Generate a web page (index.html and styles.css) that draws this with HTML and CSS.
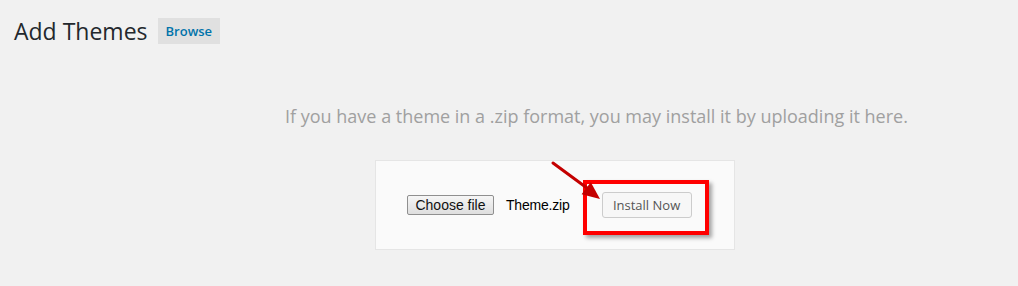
FILE: index.html
```html
<!DOCTYPE html>
<html>
<head>
<meta charset="utf-8">
<link rel="stylesheet" href="styles.css">
</head>
<body>
<div class="wrap">
  <div class="title-row">
    <h1 class="title">Add Themes</h1>
    <a class="title-action">Browse</a>
  </div>
  <p class="install-help">If you have a theme in a .zip format, you may install it by uploading it here.</p>
  <div class="upload-form">
    <div class="file-field">
      <span class="choose-btn">Choose file</span>
      <span class="file-name">Theme.zip</span>
    </div>
    <span class="install-btn">Install Now</span>
    <div class="highlight"></div>
    <svg class="arrow" width="60" height="50" viewBox="0 0 60 50">
      <line x1="8" y1="7" x2="44" y2="33.5" stroke="#c40000" stroke-width="3" stroke-linecap="round"/>
      <polygon points="55,43 36.6,38.3 45.8,26.2" fill="#c40000"/>
    </svg>
  </div>
</div>
</body>
</html>
```
FILE: styles.css
```css
html, body {
  margin: 0;
  padding: 0;
  background: #f1f1f1;
}
body {
  font-family: "Open Sans", "Liberation Sans", sans-serif;
  color: #23282d;
}
.wrap {
  padding: 0 0 0 14px;
}
.title-row {
  display: flex;
  align-items: center;
  gap: 11px;
  padding-top: 18px;
  height: 26px;
}
.title {
  margin: 0;
  font-size: 23px;
  font-weight: 400;
  line-height: 26px;
  color: #23282d;
}
.title-action {
  display: inline-block;
  height: 26px;
  box-sizing: border-box;
  padding: 0 8px;
  line-height: 26px;
  background: #e0e0e0;
  color: #0073aa;
  font-size: 13px;
  font-weight: 600;
  margin-left: -1px;
}
.install-help {
  margin: 0;
  padding: 60px 0 0 271px;
  font-size: 18px;
  line-height: 24px;
  color: #a0a0a0;
}
.upload-form {
  position: relative;
  margin: 32px 0 0 361px;
  width: 299px;
  height: 28px;
  padding: 30px 30px 30px 29px;
  background: #fafafa;
  border: 1px solid #e5e5e5;
  display: flex;
  align-items: center;
}
.file-field {
  display: flex;
  align-items: center;
  gap: 12px;
  margin-left: 2px;
  font-family: "Liberation Sans", Arial, sans-serif;
  font-size: 14px;
  color: #000;
}
.choose-btn {
  display: inline-block;
  box-sizing: border-box;
  height: 20px;
  width: 87px;
  line-height: 18px;
  text-align: center;
  border: 1px solid #8f8f8f;
  border-radius: 2px;
  background: linear-gradient(#f6f6f6, #dedede);
  color: #111;
}
.file-name {
  letter-spacing: -0.2px;
}
.install-btn {
  margin-left: 32px;
  display: inline-block;
  box-sizing: border-box;
  width: 90px;
  height: 26px;
  line-height: 24px;
  text-align: center;
  border: 1px solid #cccccc;
  border-radius: 3px;
  background: #f7f7f7;
  color: #555;
  font-size: 13px;
}
.highlight {
  position: absolute;
  left: 207px;
  top: 19px;
  width: 118px;
  height: 47px;
  border: 4px solid #ff0000;
  box-shadow: 3px 3px 4px rgba(0, 0, 0, 0.35);
}
.arrow {
  position: absolute;
  left: 169px;
  top: -5px;
}
```
